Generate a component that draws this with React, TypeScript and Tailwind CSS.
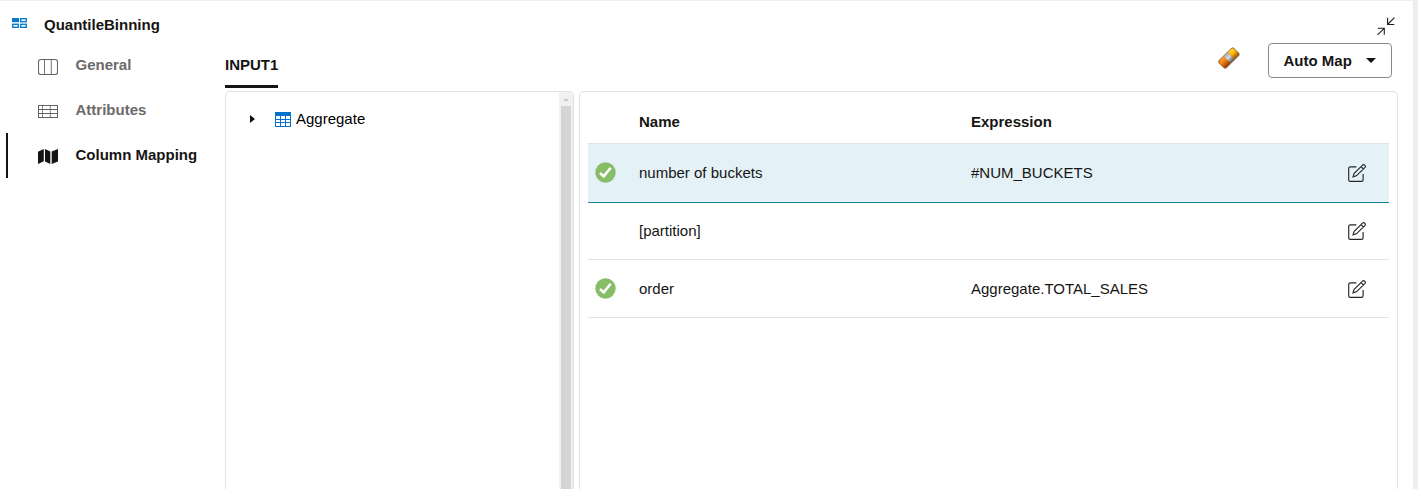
import React from "react";

function GeneralIcon() {
  return (
    <svg width="20" height="16" viewBox="0 0 20 16" fill="none" stroke="#656361">
      <rect x="0.5" y="0.5" width="19" height="15" rx="2.3" strokeWidth="1.1" />
      <path d="M6.5 1v14M13.3 1v14" strokeWidth="0.9" />
    </svg>
  );
}

function AttributesIcon() {
  return (
    <svg width="20" height="13" viewBox="0 0 20 13" fill="none" stroke="#656361">
      <rect x="0.5" y="0.5" width="19" height="12" />
      <path d="M0 4.5h20M0 8.5h20" />
      <path d="M4.5 0v13M12.3 0v13" strokeWidth="0.8" />
    </svg>
  );
}

function MapIcon() {
  return (
    <svg width="20" height="15" viewBox="0 0 20 15" fill="#161513">
      <path d="M0 2.8L5.8 0v12.2L0 15zM7 0l5.3 2.4V15L7 12.4zM13.7 2.5L20 0v12.4L13.7 15z" />
    </svg>
  );
}

function BinningIcon() {
  return (
    <svg width="15" height="10" viewBox="0 0 15 10" fill="none" stroke="#0a80cc">
      <path d="M0 0h7v4.2H0z" fill="#0a7bc8" stroke="none" />
      <rect x="8.7" y="0.7" width="5.6" height="3" strokeWidth="1.4" />
      <rect x="0.7" y="6.3" width="5.6" height="3" strokeWidth="1.4" />
      <rect x="8.7" y="6.3" width="5.6" height="3" strokeWidth="1.4" />
    </svg>
  );
}

function TableIcon() {
  return (
    <svg width="16" height="15" viewBox="0 0 16 15">
      <path d="M0 0h16v15H0z" fill="#0572ce" />
      <path
        d="M1 4h4v3H1zM6 4h4v3H6zM11 4h4v3h-4zM1 8h4v2H1zM6 8h4v2H6zM11 8h4v2h-4zM1 11h4v3H1zM6 11h4v3H6zM11 11h4v3h-4z"
        fill="#fff"
      />
    </svg>
  );
}

function EraserIcon() {
  return (
    <svg width="22" height="22" viewBox="0 0 22 22">
      <defs>
        <linearGradient id="orange" x1="0" y1="0" x2="0" y2="1">
          <stop offset="0" stopColor="#ffa62e" />
          <stop offset="0.5" stopColor="#ee7608" />
          <stop offset="1" stopColor="#8d3c08" />
        </linearGradient>
        <linearGradient id="silver" x1="0" y1="0" x2="0" y2="1">
          <stop offset="0" stopColor="#aaa" />
          <stop offset="0.45" stopColor="#d8d9dc" />
          <stop offset="1" stopColor="#60534d" />
        </linearGradient>
        <linearGradient id="yellow" x1="0" y1="0" x2="0" y2="1">
          <stop offset="0" stopColor="#ffd642" />
          <stop offset="0.5" stopColor="#fbb50a" />
          <stop offset="1" stopColor="#98550c" />
        </linearGradient>
      </defs>
      <g transform="rotate(-45 11 11)">
        <rect x="0" y="6" width="22" height="11" rx="2.4" fill="#4b3a31" opacity="0.25" />
        <rect x="0.3" y="5.5" width="21.2" height="10.6" rx="2.2" fill="#8a4a12" />
        <path d="M8.3 6v9.6H3.2a2.4 2.4 0 0 1-2.4-2.4V8.4A2.4 2.4 0 0 1 3.2 6z" fill="url(#orange)" />
        <path d="M8.3 5.8h5.8v10H8.3z" fill="url(#silver)" />
        <path d="M14.1 6h4.6A2.4 2.4 0 0 1 21 8.4v4.8a2.4 2.4 0 0 1-2.3 2.4h-4.6z" fill="url(#yellow)" />
      </g>
    </svg>
  );
}

function CollapseIcon() {
  return (
    <svg width="18" height="18" viewBox="0 0 18 18" fill="none" stroke="#222" strokeWidth="1.1">
      <path d="M17.5 0.6L11 7M10.6 0.8V7.5H17.3" />
      <path d="M0.5 17.8L7 11.6M0.8 11.3H7.3V17.8" />
    </svg>
  );
}

function CheckIcon() {
  return (
    <svg width="21" height="21" viewBox="0 0 21 21">
      <circle cx="10.5" cy="10.5" r="10.2" fill="#87bd67" />
      <path d="M5 11l3.7 3.4 7-8.6" fill="none" stroke="#fff" strokeWidth="2.6" />
    </svg>
  );
}

function EditIcon() {
  return (
    <svg width="18" height="18" viewBox="0 0 18 18" fill="none" stroke="#282725" strokeWidth="1.15">
      <path d="M8.4 2.9H2.3Q.7 2.9.7 4.5v11.2q0 1.6 1.6 1.6h11.2q1.6 0 1.6-1.6V10" />
      <path d="M5 12.9l1.2-3.5 8.1-8.1a1.6 1.6 0 0 1 2.5 2.3l-8.4 8.2zM13 2.6l2.5 2.4" />
    </svg>
  );
}

const navItems = [
  { label: "General", icon: <GeneralIcon />, active: false, offset: "mt-[3px]" },
  { label: "Attributes", icon: <AttributesIcon />, active: false, offset: "mt-px" },
  { label: "Column Mapping", icon: <MapIcon />, active: true, offset: "mt-px" },
];

const rows = [
  { name: "number of buckets", expression: "#NUM_BUCKETS", ok: true, style: "h-[59px] border-[#227e9e] bg-[#e4f1f7]", checkOffset: "pb-px" },
  { name: "[partition]", expression: "", ok: false, style: "h-[57px] border-[#e2e2e2]", checkOffset: "" },
  { name: "order", expression: "Aggregate.TOTAL_SALES", ok: true, style: "h-[58px] border-[#e2e2e2]", checkOffset: "" },
];

function Sidebar() {
  return (
    <nav className="w-[219px] shrink-0 pl-1.5">
      {navItems.map((item) => (
        <div
          key={item.label}
          className={`flex h-[45px] items-center border-l-2 pl-[30px] font-bold ${
            item.active ? "border-[#161513] text-[#161513]" : "border-transparent text-[#6b6967]"
          }`}
        >
          <span className={`w-[37.5px] shrink-0 ${item.offset}`}>{item.icon}</span>
          <span className="whitespace-nowrap pb-0.5">{item.label}</span>
        </div>
      ))}
    </nav>
  );
}

function SourceTree() {
  return (
    <div className="flex h-full w-[349px] shrink-0 overflow-hidden rounded-t-[5px] border border-b-0 border-[#e2e2e2]">
      <div className="flex h-[54px] flex-1 items-center pl-6 text-black">
        <svg width="5" height="8" viewBox="0 0 5 8" className="mr-5">
          <path d="M0 0l5 4-5 4z" fill="#111" />
        </svg>
        <TableIcon />
        <span className="ml-[5px]">Aggregate</span>
      </div>
      <div className="flex h-full w-[14px] flex-col items-center bg-[#f1f1f1]">
        <div className="flex h-[14px] shrink-0 items-center justify-center">
          <svg width="6" height="3" viewBox="0 0 6 3">
            <path d="M0 3l3-3 3 3z" fill="#c6c6c6" />
          </svg>
        </div>
        <div className="w-[10px] flex-1 bg-[#d5d5d5]" />
      </div>
    </div>
  );
}

function MappingTable() {
  return (
    <div className="ml-[5px] h-full w-[819px] shrink-0 rounded-t-[5px] border border-b-0 border-[#e2e2e2] px-2">
      <div className="flex h-[52px] items-center border-b border-[#e2e2e2] pt-2 font-bold">
        <span className="ml-[51px] w-[332px]">Name</span>
        <span>Expression</span>
      </div>
      {rows.map((row) => (
        <div key={row.name} className={`flex items-center border-b ${row.style}`}>
          <span className={`w-[51px] shrink-0 pl-[7px] ${row.checkOffset}`}>{row.ok && <CheckIcon />}</span>
          <span className="w-[332px] shrink-0">{row.name}</span>
          <span className="flex-1">{row.expression}</span>
          <span className="mr-[23px]">
            <EditIcon />
          </span>
        </div>
      ))}
    </div>
  );
}

export default function App() {
  return (
    <div className="flex h-[489px] w-[1418px] overflow-hidden bg-[#efeeec] pt-px font-['Liberation_Sans',Arial,sans-serif] text-[15px] leading-5 text-[#161513]">
      <div className="flex w-[1413px] shrink-0 flex-col bg-white">
        <header className="flex h-[42px] shrink-0 items-start pl-3 pt-[14px]">
          <span className="mt-[3px] w-8">
            <BinningIcon />
          </span>
          <h1 className="font-bold">QuantileBinning</h1>
          <button className="ml-auto mr-[18px] mt-0.5">
            <CollapseIcon />
          </button>
        </header>
        <div className="flex min-h-0 flex-1">
          <Sidebar />
          <main className="flex min-w-0 flex-1 flex-col pl-1.5">
            <div className="flex h-12 shrink-0 items-start">
              <div className="h-[45px] border-b-[3px] border-[#161513] pt-3 font-bold">INPUT1</div>
              <button className="ml-auto mt-1">
                <EraserIcon />
              </button>
              <button className="ml-[28px] mr-[21px] flex h-[35px] w-[124px] items-center rounded-[4px] border border-[#8b8987] pl-[14.5px] font-bold">
                Auto Map
                <svg width="10" height="5" viewBox="0 0 10 5" className="ml-[14px]">
                  <path d="M0 0h10L5 5z" fill="#161513" />
                </svg>
              </button>
            </div>
            <div className="flex min-h-0 flex-1">
              <SourceTree />
              <MappingTable />
            </div>
          </main>
        </div>
      </div>
    </div>
  );
}
